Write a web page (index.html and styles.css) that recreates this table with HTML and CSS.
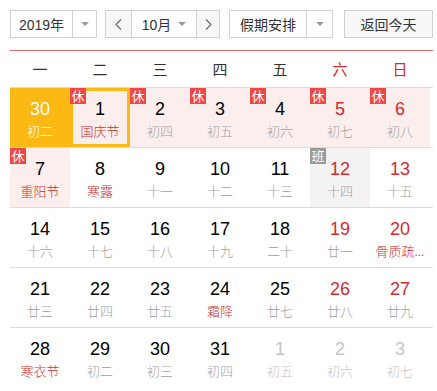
FILE: index.html
```html
<!DOCTYPE html>
<html lang="zh-CN">
<head>
<meta charset="utf-8">
<link rel="stylesheet" href="styles.css">
</head>
<body>
<div class="cal">
  <div class="toolbar">
    <div class="select year">
      <span class="sel-text">2019年</span>
      <span class="sel-arrow"><i class="tri"></i></span>
    </div>
    <div class="month-group">
      <span class="nav"><svg width="7" height="11" viewBox="0 0 7 11"><polyline points="6,0.5 1,5.5 6,10.5" fill="none" stroke="#666" stroke-width="1.1"/></svg></span>
      <span class="month">10月<i class="tri"></i></span>
      <span class="nav next"><svg width="7" height="11" viewBox="0 0 7 11"><polyline points="1,0.5 6,5.5 1,10.5" fill="none" stroke="#666" stroke-width="1.1"/></svg></span>
    </div>
    <div class="select holiday">
      <span class="sel-text">假期安排</span>
      <span class="sel-arrow"><i class="tri"></i></span>
    </div>
    <div class="today-btn">返回今天</div>
  </div>

  <div class="weekhead">
    <span>一</span><span>二</span><span>三</span><span>四</span><span>五</span><span class="we">六</span><span class="we">日</span>
  </div>

  <div class="grid">
    <div class="row">
      <div class="cell today"><b>30</b><em>初二</em></div>
      <div class="cell rest sel"><i class="badge">休</i><b>1</b><em class="fest">国庆节</em></div>
      <div class="cell rest"><i class="badge">休</i><b>2</b><em>初四</em></div>
      <div class="cell rest"><i class="badge">休</i><b>3</b><em>初五</em></div>
      <div class="cell rest"><i class="badge">休</i><b>4</b><em>初六</em></div>
      <div class="cell rest red"><i class="badge">休</i><b>5</b><em>初七</em></div>
      <div class="cell rest red"><i class="badge">休</i><b>6</b><em>初八</em></div>
    </div>
    <div class="row">
      <div class="cell rest"><i class="badge">休</i><b>7</b><em class="fest">重阳节</em></div>
      <div class="cell"><b>8</b><em class="fest">寒露</em></div>
      <div class="cell"><b>9</b><em>十一</em></div>
      <div class="cell"><b>10</b><em>十二</em></div>
      <div class="cell"><b>11</b><em>十三</em></div>
      <div class="cell work red"><i class="badge gray">班</i><b>12</b><em>十四</em></div>
      <div class="cell red"><b>13</b><em>十五</em></div>
    </div>
    <div class="row">
      <div class="cell"><b>14</b><em>十六</em></div>
      <div class="cell"><b>15</b><em>十七</em></div>
      <div class="cell"><b>16</b><em>十八</em></div>
      <div class="cell"><b>17</b><em>十九</em></div>
      <div class="cell"><b>18</b><em>二十</em></div>
      <div class="cell red"><b>19</b><em>廿一</em></div>
      <div class="cell red"><b>20</b><em class="fest">骨质疏...</em></div>
    </div>
    <div class="row">
      <div class="cell"><b>21</b><em>廿三</em></div>
      <div class="cell"><b>22</b><em>廿四</em></div>
      <div class="cell"><b>23</b><em>廿五</em></div>
      <div class="cell"><b>24</b><em class="fest">霜降</em></div>
      <div class="cell"><b>25</b><em>廿七</em></div>
      <div class="cell red"><b>26</b><em>廿八</em></div>
      <div class="cell red"><b>27</b><em>廿九</em></div>
    </div>
    <div class="row">
      <div class="cell"><b>28</b><em class="fest">寒衣节</em></div>
      <div class="cell"><b>29</b><em>初二</em></div>
      <div class="cell"><b>30</b><em>初三</em></div>
      <div class="cell"><b>31</b><em>初四</em></div>
      <div class="cell other"><b>1</b><em>初五</em></div>
      <div class="cell other"><b>2</b><em>初六</em></div>
      <div class="cell other"><b>3</b><em>初七</em></div>
    </div>
  </div>
</div>
</body>
</html>
```

FILE: styles.css
```css
* { box-sizing: border-box; }
html, body { margin: 0; padding: 0; background: #fff; }
body {
  font-family: "Liberation Sans", Arial, "Noto Sans CJK SC", sans-serif;
  color: #333;
}
.cal {
  padding: 10px 0 0 10px;
  width: 433px;
}
.toolbar {
  display: flex;
  height: 28px;
  font-size: 14px;
  font-family: "Liberation Sans", Arial, "Noto Sans CJK SC", sans-serif;
}
.select {
  display: flex;
  border: 1px solid #d2d2d2;
  background: #fff;
  height: 28px;
}
.sel-text {
  display: flex;
  align-items: center;
  justify-content: center;
  border-right: 1px solid #d2d2d2;
  color: #333;
}
.sel-arrow {
  display: flex;
  align-items: center;
  justify-content: center;
  flex: 1;
}
.tri {
  display: inline-block;
  width: 0; height: 0;
  border-left: 4px solid transparent;
  border-right: 4px solid transparent;
  border-top: 4px solid #999;
}
.year { width: 87px; }
.year .sel-text { width: 62px; }
.month-group {
  margin-left: 8px;
  width: 115px;
  display: flex;
  border: 1px solid #d2d2d2;
  height: 28px;
}
.nav {
  width: 26px;
  display: flex;
  align-items: center;
  justify-content: center;
  background: #f7f7f7;
  border-right: 1px solid #d2d2d2;
}
.nav.next {
  border-right: 0;
  border-left: 1px solid #d2d2d2;
  width: 23px;
}
.month {
  flex: 1;
  display: flex;
  align-items: center;
  justify-content: center;
  gap: 7px;
  background: #fff;
}
.holiday { margin-left: 9px; width: 104px; }
.holiday .sel-text { width: 77px; }
.today-btn {
  margin-left: 11px;
  width: 89px;
  height: 28px;
  border: 1px solid #d2d2d2;
  background: #f7f7f7;
  display: flex;
  align-items: center;
  justify-content: center;
  color: #333;
}
.weekhead {
  margin-top: 12px;
  border-top: 1px solid #e26b6f;
  height: 37px;
  display: grid;
  grid-template-columns: repeat(7, 60px);
  align-items: center;
  font-size: 15px;
  font-family: "Noto Sans CJK SC", sans-serif;
  color: #333;
}
.weekhead span { text-align: center; line-height: 20px; }
.weekhead .we { color: #d6292d; }
.row {
  display: grid;
  grid-template-columns: repeat(7, 60px);
  border-top: 1px solid #ddd;
  height: 60px;
  width: 423px;
}
.cell {
  position: relative;
  height: 59px;
  display: flex;
  flex-direction: column;
  align-items: center;
  padding-top: 11px;
}
.cell b {
  font-weight: normal;
  font-size: 18px;
  line-height: 21px;
  color: #000;
  font-family: "Liberation Sans", Arial, sans-serif;
}
.cell em {
  font-style: normal;
  font-size: 13px;
  line-height: 17px;
  margin-top: 2px;
  color: #9e9e9e;
  font-family: "Noto Sans CJK SC", sans-serif;
  font-weight: 300;
  white-space: nowrap;
}
.cell em.fest { color: #cf2f2f; }
.cell.red b { color: #d6292d; }
.cell.rest { background: #fdeeee; }
.cell.work { background: #f3f3f3; }
.cell.today { background: #fdb913; }
.cell.today b, .cell.today em { color: #fff; }
.cell.sel { box-shadow: inset 0 0 0 3px #fdb913; }
.cell.other b { color: #c4c4c4; }
.cell.other em { color: #c4c4c4; }
.badge {
  position: absolute;
  top: 0; left: 0;
  width: 16px; height: 16px;
  background: #f24646;
  color: #fff;
  font-style: normal;
  font-size: 13px;
  line-height: 16px;
  text-align: center;
  font-family: "Noto Sans CJK SC", sans-serif;
  z-index: 1;
}
.badge.gray { background: #9a9a9a; }
```
